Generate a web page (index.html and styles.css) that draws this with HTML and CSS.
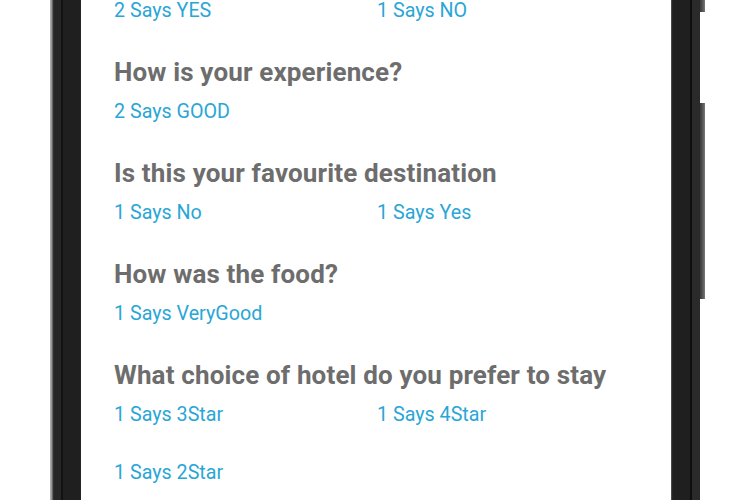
FILE: index.html
```html
<!DOCTYPE html>
<html lang="en">
<head>
<meta charset="utf-8">
<title>Survey results</title>
<link rel="stylesheet" href="styles.css">
</head>
<body>
<div class="device">
  <div class="bezel-left"></div>
  <main class="screen">
    <section class="group">
      <div class="answers">
        <span class="answer">2 Says YES</span>
        <span class="answer">1 Says NO</span>
      </div>
    </section>
    <section class="group">
      <h2 class="question">How is your experience?</h2>
      <div class="answers">
        <span class="answer">2 Says GOOD</span>
      </div>
    </section>
    <section class="group">
      <h2 class="question">Is this your favourite destination</h2>
      <div class="answers">
        <span class="answer">1 Says No</span>
        <span class="answer">1 Says Yes</span>
      </div>
    </section>
    <section class="group">
      <h2 class="question">How was the food?</h2>
      <div class="answers">
        <span class="answer">1 Says VeryGood</span>
      </div>
    </section>
    <section class="group">
      <h2 class="question">What choice of hotel do you prefer to stay</h2>
      <div class="answers">
        <span class="answer">1 Says 3Star</span>
        <span class="answer">1 Says 4Star</span>
        <span class="answer">1 Says 2Star</span>
      </div>
    </section>
  </main>
  <div class="bezel-right"></div>
  <div class="button-rail">
    <div class="side-btn top-btn"></div>
    <div class="side-btn volume-btn"></div>
  </div>
</div>
</body>
</html>
```
FILE: styles.css
```css
html, body {
  margin: 0;
  padding: 0;
  background: #ffffff;
  height: 500px;
  overflow: hidden;
}
.device {
  display: flex;
  height: 500px;
  margin-left: 50px;
  width: 655px;
}
.bezel-left {
  width: 31px;
  flex: none;
  background: linear-gradient(to right,
    #b5b5b5 0px, #8c8c8c 2px, #3a3a3a 3px, #262626 4px,
    #262626 11px, #121212 11px, #121212 13px,
    #1f1f1f 13px, #1f1f1f 30px, #2c2c2c 31px);
}
.screen {
  width: 590px;
  flex: none;
  background: #ffffff;
  padding: 0 0 0 33px;
  box-sizing: border-box;
  font-family: Roboto, "Liberation Sans", Arial, sans-serif;
  overflow: hidden;
}
.bezel-right {
  width: 29px;
  flex: none;
  background: linear-gradient(to right,
    #6a6a6a 0px, #2a2a2a 1px, #1f1f1f 2px, #1f1f1f 19px,
    #0e0e0e 19px, #0e0e0e 21px, #2a2a2a 21px, #2a2a2a 29px);
}
.button-rail {
  width: 5px;
  flex: none;
  display: flex;
  flex-direction: column;
}
.side-btn {
  background: linear-gradient(to right, #3a3a3a, #5a5a5a 60%, #7a7a7a);
}
.top-btn {
  height: 12px;
}
.volume-btn {
  height: 196px;
  margin-top: 91px;
}
.group {
  margin-bottom: 35px;
}
.question {
  margin: 0 0 14px 0;
  font-size: 26px;
  line-height: 30px;
  font-weight: 700;
  letter-spacing: 0.15px;
  color: #6d6d6d;
}
.answers {
  display: grid;
  grid-template-columns: 263px 263px;
  row-gap: 36px;
}
.answer {
  font-size: 19.7px;
  line-height: 22px;
  color: #2aa6d6;
}
```
